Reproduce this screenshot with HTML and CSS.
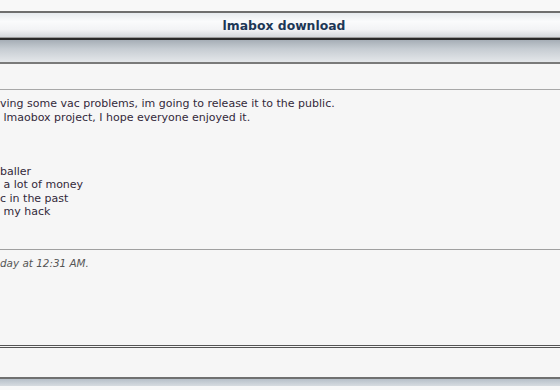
FILE: index.html
```html
<!DOCTYPE html>
<html lang="en">
<head>
  <meta charset="UTF-8">
  <title>lmabox download</title>
  <link rel="stylesheet" href="styles.css">
</head>
<body>
<div class="thread">
    <div class="titlebar">
        <h1>lmabox download</h1>
    </div>
    <div class="subbar"></div>
    <div class="postbar"></div>

    <!-- Beitrag -->
    <div class="post">
        <div class="message">ving some vac problems, im going to release it to the public.
 lmaobox project, I hope everyone enjoyed it.



baller
 a lot of money
c in the past
 my hack</div>
        <div class="edited">day at 12:31 AM.</div>
    </div>

    <div class="postfoot"></div>
    <div class="bottombar"></div>
</div>
</body>
</html>
```

FILE: styles.css
```css
body {
  margin: 0;
  padding: 0;
  background-color: #f8f8f8;
  font-family: "DejaVu Sans", Verdana, sans-serif;
  overflow: hidden;
}
.thread {
  padding-top: 11px;
}
.titlebar {
  height: 24px;
  border-top: 2px solid #6e6e6e;
  border-bottom: 1px solid #9a9a9a;
  background: linear-gradient(#e6eaee, #fafbfc 35%, #f2f3f5 70%, #d4d8dc);
  text-align: center;
  padding-left: 8px;
}
.titlebar h1 {
  margin: 0;
  font-size: 12.4px;
  line-height: 26px;
  color: #1d3756;
  font-weight: bold;
}
.subbar {
  height: 22px;
  border-top: 2px solid #2a2a2a;
  border-bottom: 2px solid #7a7a7a;
  background: linear-gradient(#a6aeb6, #c6ccd2 40%, #e4e7ea);
}
.postbar {
  height: 25px;
  background: #f6f6f6;
  border-bottom: 1px solid #a8a8a8;
}
.post {
  background: #f6f6f6;
}
.message {
  white-space: pre;
  font-size: 11px;
  line-height: 13.5px;
  color: #33293a;
  padding: 7px 0 31px 0;
  height: 121px;
  border-bottom: 1px solid #a0a0a0;
}
.edited {
  font-size: 10.4px;
  font-style: italic;
  color: #555;
  padding: 7px 0 0 0;
  height: 88px;
}
.postfoot {
  height: 29px;
  background: #f6f6f6;
  border-top: 3px double #555;
  border-bottom: 2px solid #707070;
}
.bottombar {
  height: 7px;
  background: linear-gradient(#b7c0c9, #d6dbe0);
}
```
